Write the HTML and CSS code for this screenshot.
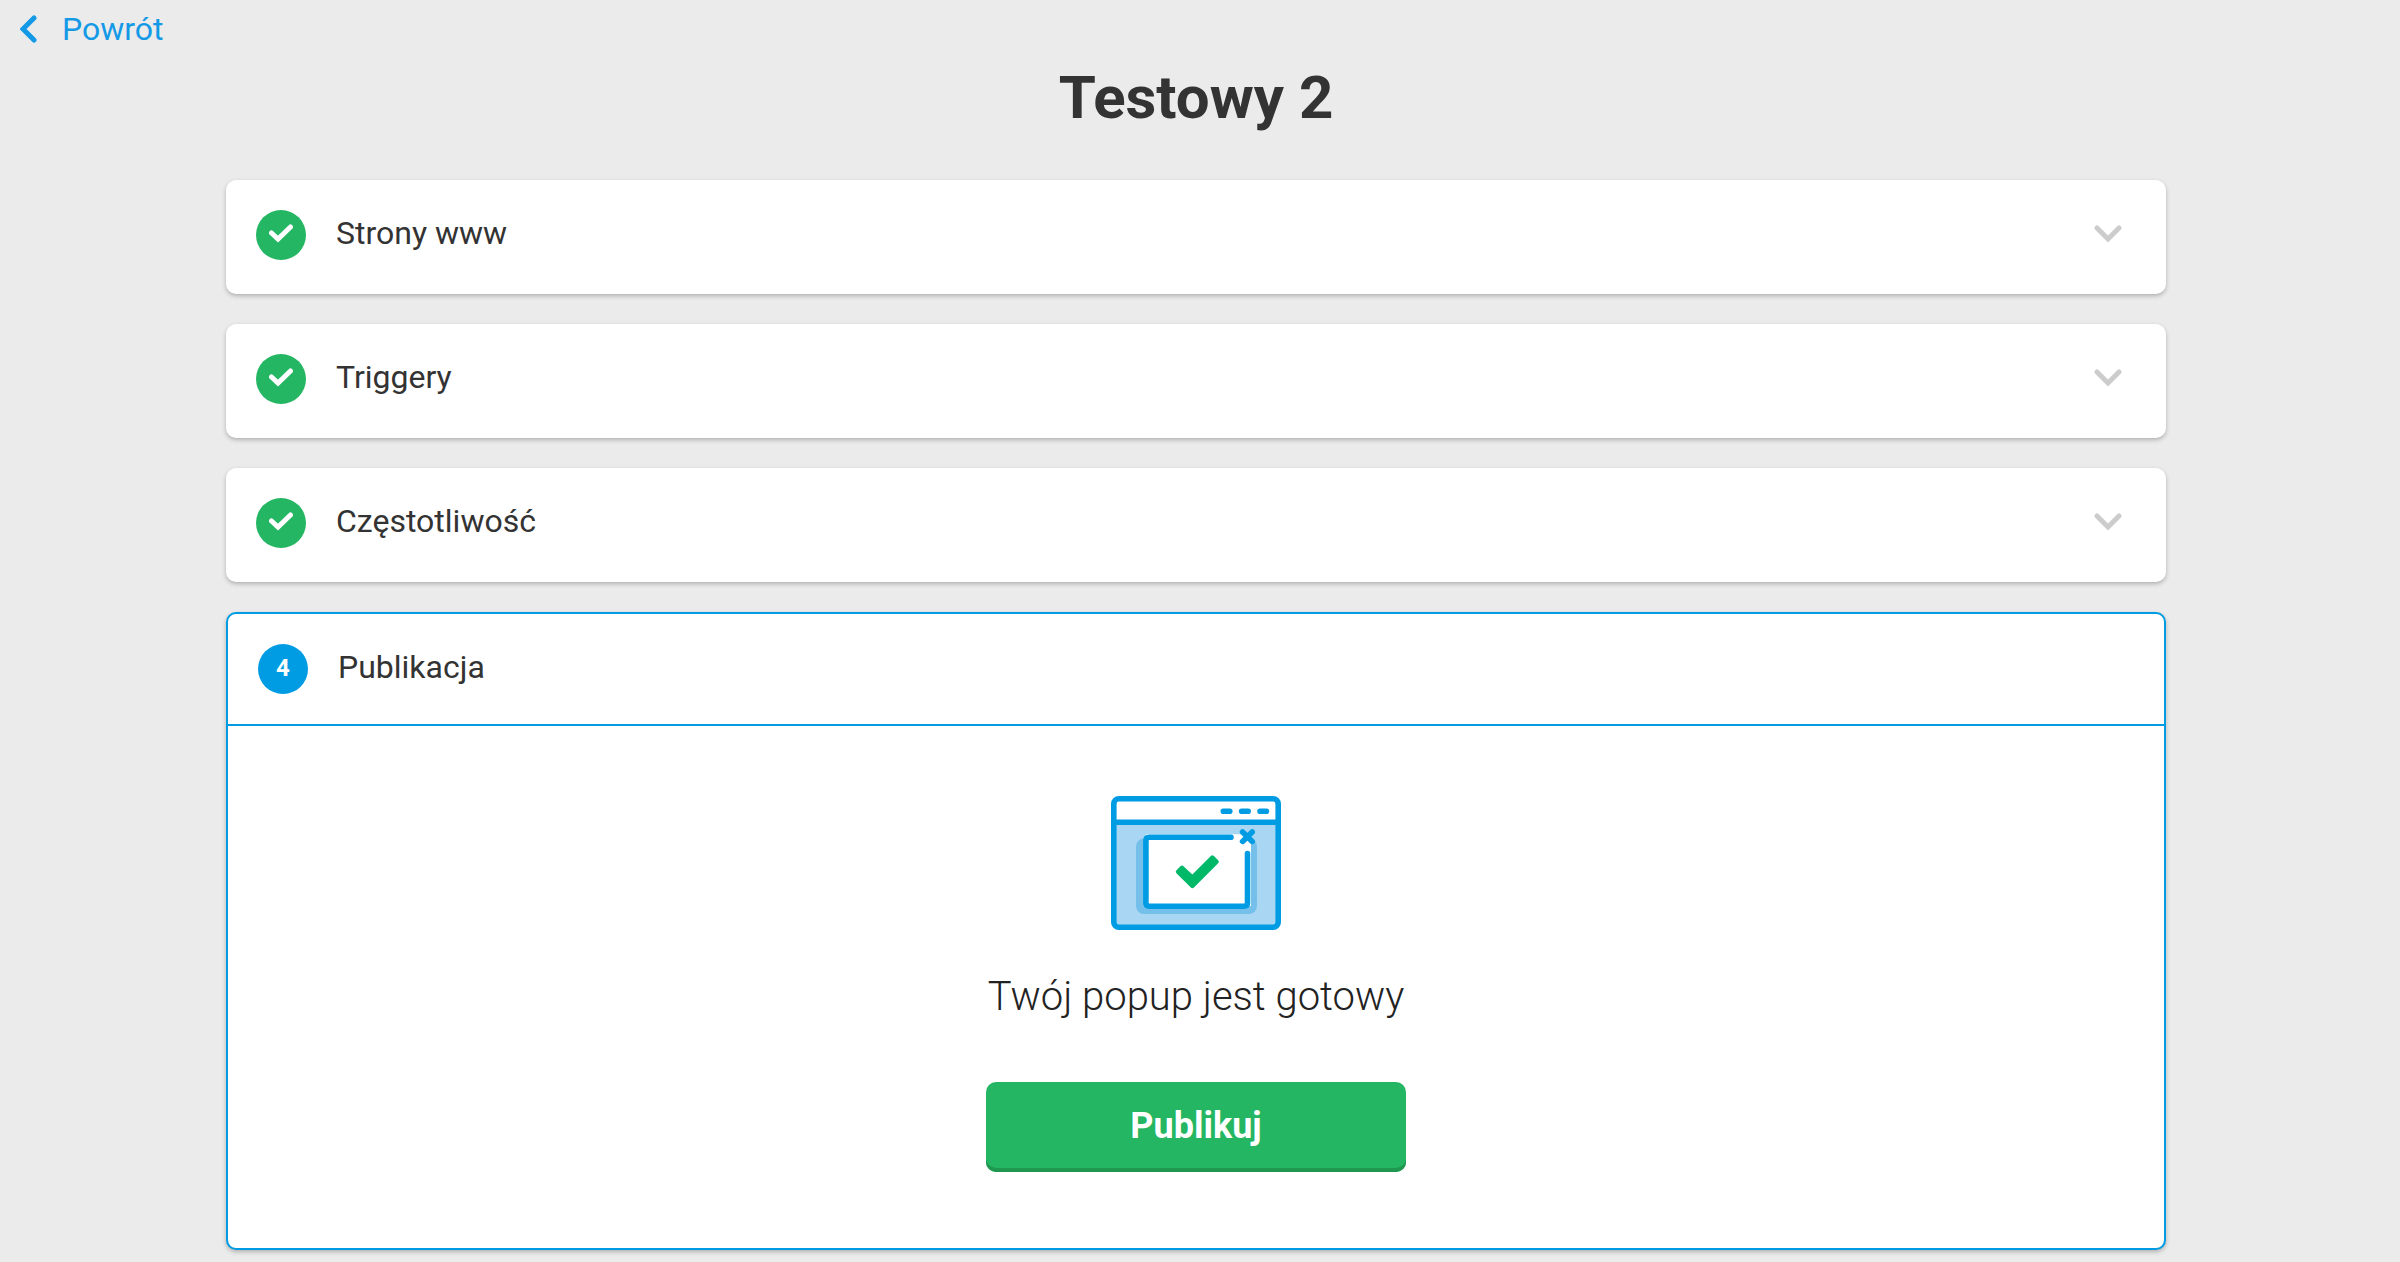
FILE: index.html
```html
<!DOCTYPE html>
<html lang="pl">
<head>
  <meta charset="UTF-8" />
  <meta name="viewport" content="width=device-width, initial-scale=1.0" />
  <title>Testowy 2</title>
  <link rel="stylesheet" href="styles.css">
</head>
<body>
  <nav class="top-bar">
    <a href="#" class="back-link">
      <svg class="back-icon" viewBox="0 0 18 28" aria-hidden="true">
        <path d="M14 3 L3 14 L14 25" />
      </svg>
      Powrót
    </a>
  </nav>

  <main class="page">
    <h1 class="page-title">Testowy 2</h1>

    <div class="steps">
      <section class="step">
        <button type="button" class="step-header" aria-expanded="false">
          <span class="step-badge done">
            <svg class="check-icon" viewBox="0 0 24 18" aria-hidden="true"><path d="M2.5 9 L9 15 L21.5 3" /></svg>
          </span>
          <span class="step-name">Strony www</span>
          <svg class="chevron" viewBox="0 0 28 18" aria-hidden="true"><path d="M3 3 L14 14 L25 3" /></svg>
        </button>
      </section>

      <section class="step">
        <button type="button" class="step-header" aria-expanded="false">
          <span class="step-badge done">
            <svg class="check-icon" viewBox="0 0 24 18" aria-hidden="true"><path d="M2.5 9 L9 15 L21.5 3" /></svg>
          </span>
          <span class="step-name">Triggery</span>
          <svg class="chevron" viewBox="0 0 28 18" aria-hidden="true"><path d="M3 3 L14 14 L25 3" /></svg>
        </button>
      </section>

      <section class="step">
        <button type="button" class="step-header" aria-expanded="false">
          <span class="step-badge done">
            <svg class="check-icon" viewBox="0 0 24 18" aria-hidden="true"><path d="M2.5 9 L9 15 L21.5 3" /></svg>
          </span>
          <span class="step-name">Częstotliwość</span>
          <svg class="chevron" viewBox="0 0 28 18" aria-hidden="true"><path d="M3 3 L14 14 L25 3" /></svg>
        </button>
      </section>

      <section class="step active">
        <button type="button" class="step-header" aria-expanded="true">
          <span class="step-badge">4</span>
          <span class="step-name">Publikacja</span>
        </button>
        <div class="step-content">
          <!-- okno przeglądarki z popupem -->
          <svg class="popup-image" viewBox="0 0 170 134" fill="none" aria-hidden="true">
            <rect x="2.8" y="2.8" width="164.4" height="128.4" rx="5" fill="#fff" />
            <path d="M3 26 H167 V131 H3 Z" fill="#a9d7f3" />
            <rect x="25" y="42.5" width="121" height="75.5" rx="8" fill="#75bfeb" />
            <path d="M35 38.3 H140 V110 H35 Z" fill="#fff" />
            <g stroke="#009ce3" stroke-width="5.6" stroke-linecap="round">
              <rect x="2.8" y="2.8" width="164.4" height="128.4" rx="5" />
              <path d="M3 26.3 H167" />
              <path d="M112.3 15.2 H118.8 M130.6 15.2 H137.2 M149 15.2 H155.4" />
              <path d="M120 41.3 H38.3 Q34.9 41.3 34.9 44.7 V106.8 Q34.9 110.2 38.3 110.2 H133.1 Q136.5 110.2 136.5 106.8 V57.5" />
              <path d="M131.6 36 L141.2 45.4 M141.2 36 L131.6 45.4" />
            </g>
            <path d="M67 75.8 L71 71.8 L81.4 81.5 L101.4 61.6 L105.6 65.8 L81.4 90 Z" fill="#00b968" stroke="#00b968" stroke-width="4.4" stroke-linejoin="round" />
          </svg>
          <p class="ready-text">Twój popup jest gotowy</p>
          <button type="button" class="publish-button">Publikuj</button>
        </div>
      </section>
    </div>
  </main>
</body>
</html>
```

FILE: styles.css
```css
* {
  box-sizing: border-box;
}

body {
  margin: 0;
  background-color: #ebebeb;
  color: #333;
  font-family: Roboto, Arial, sans-serif;
  font-size: 32px;
}

button {
  border: none;
  font-family: inherit;
  cursor: pointer;
}

/* ===== Powrót ===== */
.top-bar {
  display: flex;
  padding: 10px 20px;
}

.back-link {
  display: flex;
  align-items: center;
  gap: 24px;
  line-height: 38px;
  color: #1399e6;
  text-decoration: none;
}

.back-icon {
  width: 18px;
  height: 28px;
}

.back-icon path,
.check-icon path,
.chevron path {
  fill: none;
  stroke: currentColor;
  stroke-width: 5;
  stroke-linecap: round;
}

.page {
  padding: 4px 8px 12px 0;
}

.page-title {
  margin: 0 0 46px;
  font-size: 60px;
  line-height: 72px;
  font-weight: 700;
  text-align: center;
}

/* ===== Kroki ===== */
.steps {
  display: flex;
  flex-direction: column;
  gap: 30px;
  max-width: 1940px;
  margin: 0 auto;
}

.step {
  background-color: #fff;
  border-radius: 10px;
  box-shadow: 0 2px 4px rgba(0, 0, 0, 0.25);
}

.step-header {
  display: flex;
  align-items: flex-start;
  gap: 30px;
  width: 100%;
  padding: 30px 44px 34px 30px;
  background: none;
  color: inherit;
  font-size: 32px;
  line-height: 46px;
  text-align: left;
}

.step-badge {
  display: flex;
  justify-content: center;
  width: 50px;
  height: 50px;
  border-radius: 50%;
  background-color: #009ce3;
  color: #fff;
  font-size: 24px;
  line-height: 48px;
  font-weight: 700;
}

.step-badge.done {
  background-color: #24b662;
}

.check-icon {
  width: 24px;
  height: 46px;
}

.step-name {
  flex: 1;
}

.chevron {
  width: 28px;
  height: 48px;
  color: #ccc;
}

.step.active {
  border: 2px solid #009ce3;
}

.active .step-header {
  padding-bottom: 30px;
  border-bottom: 2px solid #009ce3;
}

.step-content {
  display: flex;
  flex-direction: column;
  align-items: center;
  padding: 70px 30px 76px;
}

.popup-image {
  width: 170px;
  height: 134px;
}

.ready-text {
  margin: 44px 0 62px;
  color: #222;
  font-size: 40px;
  line-height: 46px;
  font-weight: 300;
}

.publish-button {
  width: 420px;
  max-width: 100%;
  height: 90px;
  padding: 0 20px 2px;
  border-radius: 10px;
  background-color: #24b662;
  box-shadow: inset 0 -4px #1f974f;
  color: #fff;
  font-size: 36px;
  font-weight: 700;
}
```
